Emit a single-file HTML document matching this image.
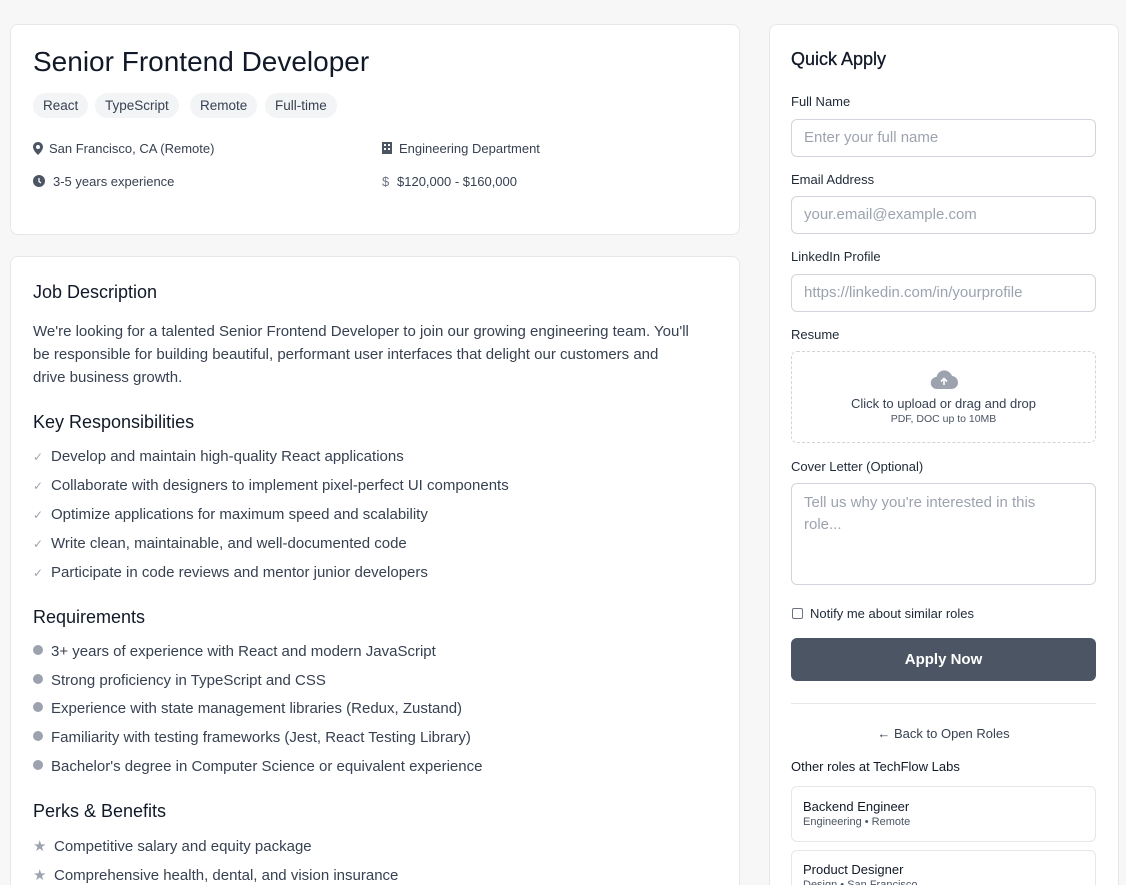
<!DOCTYPE html>
<html style="height:885px;overflow:hidden"><head><meta charset="utf-8"><style>
*{box-sizing:border-box;margin:0;padding:0}
body{width:1126px;height:885px;overflow:hidden;background:#f7f7f7;font-family:"Liberation Sans",sans-serif;color:#111827;position:relative}
.card{position:absolute;background:#fff;border:1px solid #e5e7eb;border-radius:8px}
.a{position:absolute;white-space:nowrap}
.tag{position:absolute;top:93px;height:25px;line-height:25px;background:#f3f4f6;border-radius:13px;font-size:13.5px;color:#374151;padding:0 10px}
.meta{font-size:13px;color:#374151}
.h2{font-size:18px;color:#111827}
.li{font-size:15px;color:#374151;left:33px}
.li span{display:inline-block;width:18px}
.lbl{font-size:13px;color:#1f2937;left:791px}
.inp{position:absolute;left:791px;width:305px;border:1px solid #d1d5db;border-radius:6px;font-size:15px;color:#9ca3af;padding-left:12px}
.dot{display:inline-block;width:10px;height:10px;border-radius:50%;background:#9ca3af;margin-right:8px;vertical-align:1px}
</style></head><body>
<div class="card" style="left:10px;top:24px;width:730px;height:211px"></div>
<div class="card" style="left:10px;top:256px;width:730px;height:660px"></div>
<div class="card" style="left:769px;top:24px;width:350px;height:900px"></div>

<div class="a" style="left:33px;top:46px;font-size:28px;color:#111827">Senior Frontend Developer</div>
<div class="tag" style="left:33px">React</div>
<div class="tag" style="left:95px">TypeScript</div>
<div class="tag" style="left:190px">Remote</div>
<div class="tag" style="left:265px">Full-time</div>

<svg class="a" style="left:33px;top:142px" width="10" height="13" viewBox="0 0 10 13"><path d="M5 0C2.2 0 0 2.2 0 5c0 3.5 5 8 5 8s5-4.5 5-8C10 2.2 7.8 0 5 0zm0 7a2 2 0 110-4 2 2 0 010 4z" fill="#4b5563"/></svg>
<div class="a meta" style="left:49px;top:141px">San Francisco, CA (Remote)</div>
<svg class="a" style="left:382px;top:142px" width="10" height="12"><rect width="10" height="12" fill="#4b5563"/><rect x="2" y="2" width="2" height="2" fill="#fff"/><rect x="6" y="2" width="2" height="2" fill="#fff"/><rect x="2" y="6" width="2" height="2" fill="#fff"/><rect x="6" y="6" width="2" height="2" fill="#fff"/></svg>
<div class="a meta" style="left:399px;top:141px">Engineering Department</div>
<svg class="a" style="left:33px;top:175px" width="12" height="12"><circle cx="6" cy="6" r="6" fill="#4b5563"/><path d="M6 3v3.5l2 1.5" stroke="#fff" stroke-width="1.3" fill="none"/></svg>
<div class="a meta" style="left:53px;top:174px">3-5 years experience</div>
<div class="a meta" style="left:382px;top:174px;color:#6b7280">$</div>
<div class="a meta" style="left:397px;top:174px">$120,000 - $160,000</div>

<div class="a h2" style="left:33px;top:282px">Job Description</div>
<div class="a" style="left:33px;top:320px;font-size:15px;line-height:23px;color:#374151">We're looking for a talented Senior Frontend Developer to join our growing engineering team. You'll<br>be responsible for building beautiful, performant user interfaces that delight our customers and<br>drive business growth.</div>
<div class="a h2" style="left:33px;top:412px">Key Responsibilities</div>
<div class="a li" style="top:448px"><span style="color:#9ca3af;font-size:12px">✓</span>Develop and maintain high-quality React applications</div>
<div class="a li" style="top:477px"><span style="color:#9ca3af;font-size:12px">✓</span>Collaborate with designers to implement pixel-perfect UI components</div>
<div class="a li" style="top:506px"><span style="color:#9ca3af;font-size:12px">✓</span>Optimize applications for maximum speed and scalability</div>
<div class="a li" style="top:535px"><span style="color:#9ca3af;font-size:12px">✓</span>Write clean, maintainable, and well-documented code</div>
<div class="a li" style="top:564px"><span style="color:#9ca3af;font-size:12px">✓</span>Participate in code reviews and mentor junior developers</div>
<div class="a h2" style="left:33px;top:607px">Requirements</div>
<div class="a li" style="top:643px"><i class="dot"></i>3+ years of experience with React and modern JavaScript</div>
<div class="a li" style="top:672px"><i class="dot"></i>Strong proficiency in TypeScript and CSS</div>
<div class="a li" style="top:700px"><i class="dot"></i>Experience with state management libraries (Redux, Zustand)</div>
<div class="a li" style="top:729px"><i class="dot"></i>Familiarity with testing frameworks (Jest, React Testing Library)</div>
<div class="a li" style="top:758px"><i class="dot"></i>Bachelor's degree in Computer Science or equivalent experience</div>
<div class="a h2" style="left:33px;top:801px">Perks &amp; Benefits</div>
<div class="a li" style="top:837px"><span style="color:#9ca3af;width:21px">★</span>Competitive salary and equity package</div>
<div class="a li" style="top:866px"><span style="color:#9ca3af;width:21px">★</span>Comprehensive health, dental, and vision insurance</div>

<div class="a" style="left:791px;top:49px;font-size:18px;color:#111827;-webkit-text-stroke:0.3px #111827">Quick Apply</div>
<div class="a lbl" style="top:94px">Full Name</div>
<div class="inp" style="top:119px;height:38px;line-height:36px">Enter your full name</div>
<div class="a lbl" style="top:172px">Email Address</div>
<div class="inp" style="top:196px;height:38px;line-height:36px">your.email@example.com</div>
<div class="a lbl" style="top:249px">LinkedIn Profile</div>
<div class="inp" style="top:274px;height:38px;line-height:36px">https://linkedin.com/in/yourprofile</div>
<div class="a lbl" style="top:327px">Resume</div>
<div class="a" style="left:791px;top:351px;width:305px;height:92px;border:1px dashed #d1d5db;border-radius:6px"></div>
<svg class="a" style="left:930px;top:370px" width="28" height="20" viewBox="0 0 28 20"><path d="M7 19a6 6 0 01-.5-12A8 8 0 0122 6a6.5 6.5 0 01-1 13z" fill="#9ca3af"/><path d="M14 15V9M11 11.5l3-3 3 3" stroke="#fff" stroke-width="1.6" fill="none"/></svg>
<div class="a" style="left:791px;width:305px;text-align:center;top:396px;font-size:13px;color:#374151">Click to upload or drag and drop</div>
<div class="a" style="left:791px;width:305px;text-align:center;top:413px;font-size:10.5px;color:#4b5563">PDF, DOC up to 10MB</div>
<div class="a lbl" style="top:459px">Cover Letter (Optional)</div>
<div class="inp" style="top:483px;height:102px;line-height:22px;padding-top:8px">Tell us why you're interested in this<br>role...</div>
<div class="a" style="left:792px;top:608px;width:11px;height:11px;border:1px solid #6b7280;border-radius:2px"></div>
<div class="a lbl" style="left:810px;top:606px">Notify me about similar roles</div>
<div class="a" style="left:791px;top:638px;width:305px;height:43px;background:#4b5563;border-radius:6px;color:#fff;font-size:15px;font-weight:bold;text-align:center;line-height:43px">Apply Now</div>
<div class="a" style="left:791px;top:703px;width:305px;height:1px;background:#e5e7eb"></div>
<div class="a" style="left:791px;width:305px;text-align:center;top:726px;font-size:13px;color:#374151">← Back to Open Roles</div>
<div class="a lbl" style="top:759px;color:#111827">Other roles at TechFlow Labs</div>
<div class="a" style="left:791px;top:786px;width:305px;height:56px;border:1px solid #e5e7eb;border-radius:6px"></div>
<div class="a" style="left:803px;top:799px;font-size:13px;color:#111827">Backend Engineer</div>
<div class="a" style="left:803px;top:816px;font-size:11px;color:#4b5563">Engineering • Remote</div>
<div class="a" style="left:791px;top:850px;width:305px;height:56px;border:1px solid #e5e7eb;border-radius:6px"></div>
<div class="a" style="left:803px;top:862px;font-size:13px;color:#111827">Product Designer</div>
<div class="a" style="left:803px;top:879px;font-size:11px;color:#4b5563">Design • San Francisco</div>
</body></html>
